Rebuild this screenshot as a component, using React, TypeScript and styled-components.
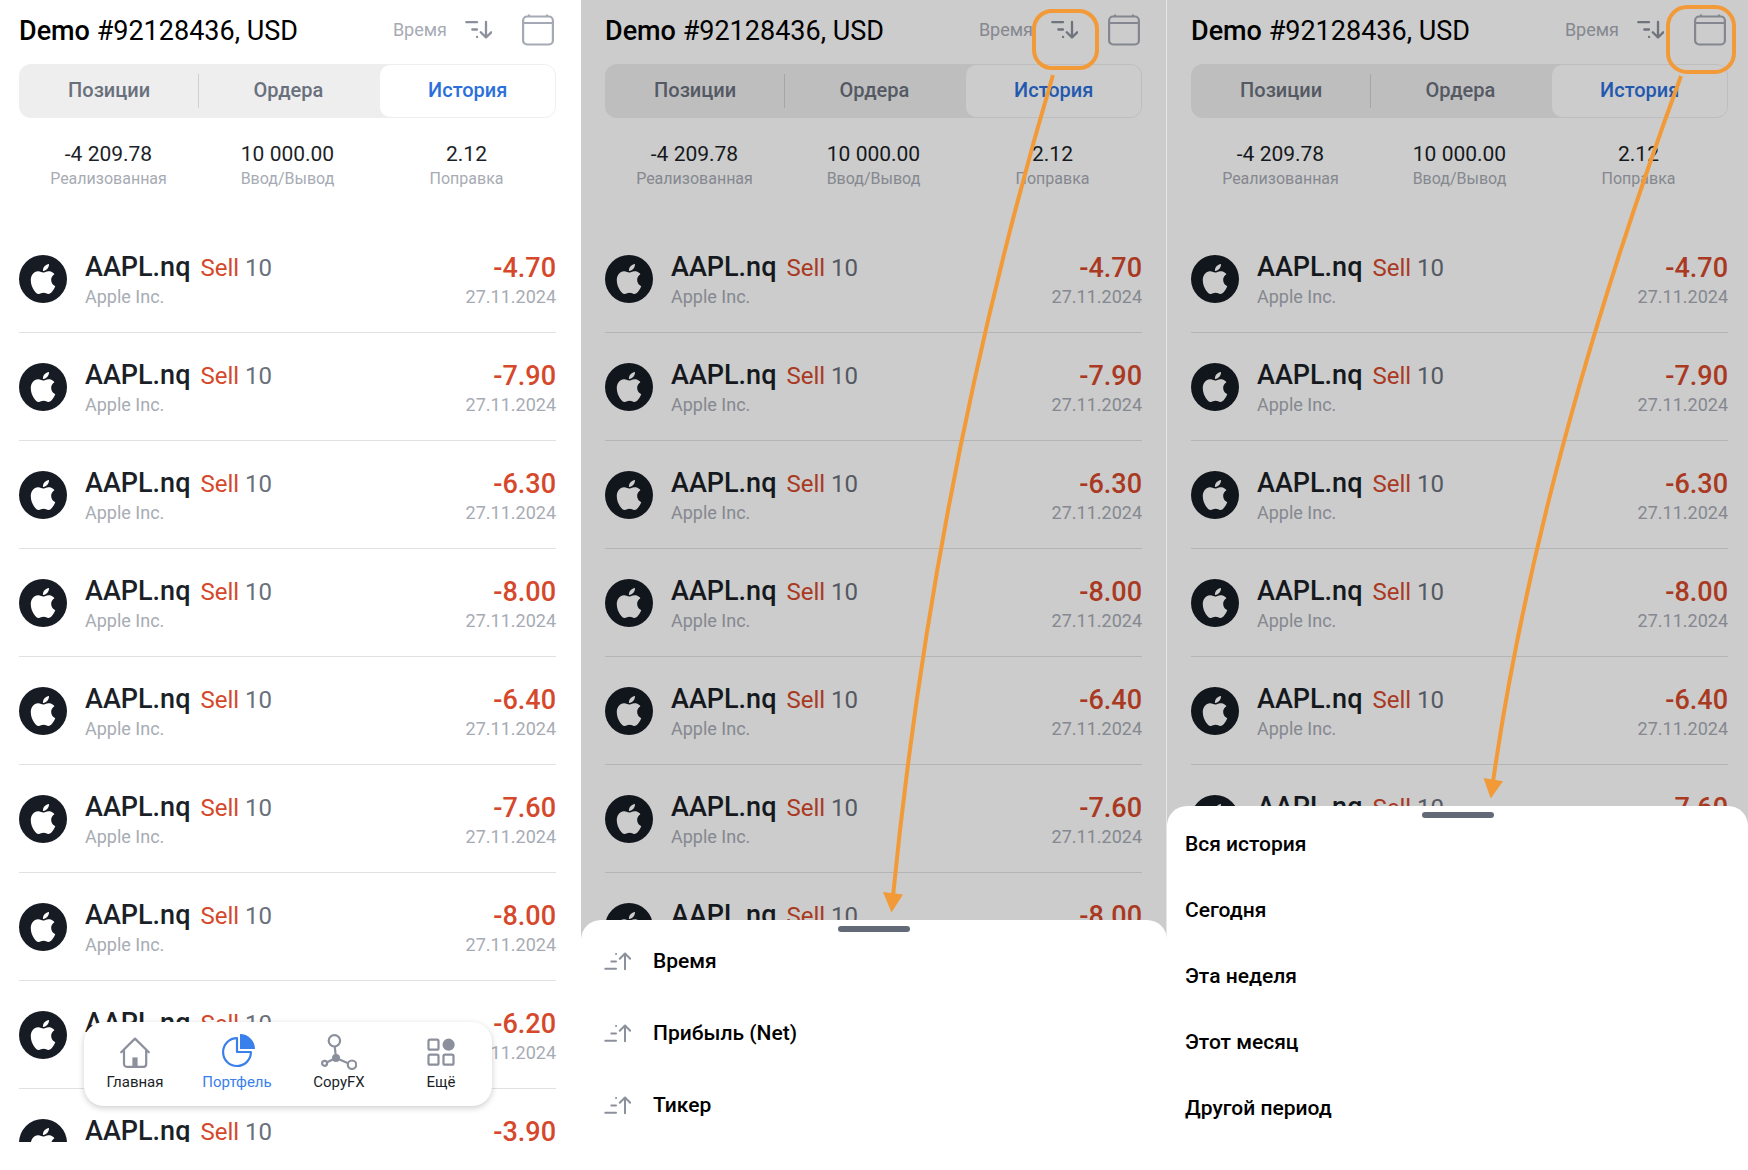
import React from "react";
import styled, { createGlobalStyle, css } from "styled-components";
import { SiApple } from "react-icons/si";

const color = {
  ink: "#1b1f27",
  muted: "#a7abb4",
  slate: "#69707c",
  icon: "#8b909c",
  red: "#d5482b",
  blue: "#2c6fdb",
  navBlue: "#3a80ec",
  orange: "#f29a38",
  line: "#e1e1e2",
};

const GlobalStyle = createGlobalStyle`
  *, *::before, *::after { box-sizing: border-box; }
  body { margin: 0; background: #fff; font-family: Roboto, "Noto Sans", sans-serif; }
  button { font: inherit; color: inherit; border: 0; padding: 0; background: none; cursor: pointer; }
  ul { list-style: none; margin: 0; padding: 0; }
`;

const Board = styled.main`
  position: relative;
  display: grid;
  grid-template-columns: 581fr 586fr 581fr;
  height: 100vh;
  overflow: hidden;
`;

const Phone = styled.section<{ $left: number; $right: number; $cut?: boolean }>`
  position: relative;
  min-width: 0;
  overflow: hidden;
  padding: 0 ${(p) => p.$right}px 0 ${(p) => p.$left}px;
  ${(p) => p.$cut && css`margin-bottom: 28px;`}
`;

const Header = styled.header`
  display: flex;
  align-items: center;
  height: 60px;
  margin-bottom: 4px;
  padding-right: 2px;
`;

const Title = styled.h1`
  flex: 1;
  margin: 0;
  padding-top: 2px;
  font-size: 27px;
  line-height: 32px;
  font-weight: 400;
  color: #000;
  white-space: nowrap;
`;

const Strong = styled.strong`
  font-weight: 500;
`;

const SortButton = styled.button`
  display: flex;
  align-items: center;
  gap: 18px;
  margin-right: 30px;
  font-size: 18px;
  line-height: 24px;
  color: ${color.muted};
`;

const CalendarButton = styled.button`
  display: flex;
`;

const Tabs = styled.nav`
  display: flex;
  align-items: center;
  height: 54px;
  padding: 1px;
  border-radius: 12px;
  background: #eeeeee;
`;

const Tab = styled.button<{ $active?: boolean }>`
  flex: 1;
  height: 100%;
  padding-bottom: 2px;
  font-size: 20px;
  line-height: 24px;
  font-weight: 500;
  color: ${(p) => (p.$active ? color.blue : color.slate)};
  ${(p) =>
    p.$active &&
    css`
      flex: 0 0 calc(33% - 2px);
      margin-left: 3px;
      background: #fff;
      border-radius: 10px;
    `}
`;

const TabDivider = styled.span`
  width: 1px;
  height: 34px;
  background: #cfd0d3;
`;

const Stats = styled.dl`
  display: grid;
  grid-template-columns: repeat(3, 1fr);
  margin: 0;
  padding: 23px 0 34px;
  text-align: center;
`;

const Stat = styled.div`
  display: flex;
  flex-direction: column-reverse;
`;

const StatValue = styled.dd`
  margin: 0;
  font-size: 21px;
  line-height: 26px;
  color: ${color.ink};
`;

const StatLabel = styled.dt`
  font-size: 16px;
  line-height: 24px;
  color: ${color.muted};
`;

const Deal = styled.li`
  display: flex;
  align-items: center;
  gap: 18px;
  height: 108px;
  border-bottom: 1px solid ${color.line};
`;

const Logo = styled.span`
  display: flex;
  align-items: center;
  justify-content: center;
  width: 48px;
  height: 48px;
  border-radius: 50%;
  background: #161b24;
  color: #fff;
`;

const DealInfo = styled.div`
  flex: 1;
`;

const DealHead = styled.div`
  display: flex;
  align-items: baseline;
  font-size: 24px;
  line-height: 36px;
`;

const Ticker = styled.span`
  margin-right: 10px;
  font-size: 27px;
  font-weight: 500;
  color: ${color.ink};
`;

const Side = styled.span`
  margin-right: 6px;
  color: ${color.red};
`;

const Volume = styled.span`
  color: ${color.slate};
`;

const Result = styled.div`
  text-align: right;
`;

const Profit = styled.div`
  font-size: 27px;
  line-height: 36px;
  font-weight: 500;
  color: ${color.red};
`;

const Note = styled.div`
  font-size: 18px;
  line-height: 22px;
  color: ${color.muted};
`;

const Shade = styled.div<{ $edge?: boolean }>`
  position: absolute;
  inset: 0;
  background: rgba(0, 0, 0, 0.2);
  ${(p) => p.$edge && css`border-right: 1px solid #e6e6e6;`}
`;

const Sheet = styled.div`
  position: absolute;
  left: 0;
  right: 0;
  bottom: 0;
  display: flex;
  flex-direction: column;
  padding: 6px 0 36px;
  border-radius: 20px 20px 0 0;
  background: #fff;
`;

const Handle = styled.span`
  align-self: center;
  width: 72px;
  height: 6px;
  border-radius: 3px;
  background: #636a77;
`;

const Options = styled.ul`
  display: flex;
  flex-direction: column;
  gap: 14px;
`;

const Option = styled.button<{ $height: number; $indent: number }>`
  display: flex;
  align-items: center;
  gap: 22px;
  width: 100%;
  height: ${(p) => p.$height}px;
  padding-left: ${(p) => p.$indent}px;
  font-size: 21px;
  line-height: 24px;
  font-weight: 500;
  color: #000;
`;

const Dock = styled.nav`
  position: absolute;
  left: 84px;
  right: 89px;
  bottom: 36px;
  display: grid;
  grid-template-columns: repeat(4, 1fr);
  padding: 12px 0 14px;
  border-radius: 20px;
  background: #fff;
  box-shadow: 0 2px 6px rgba(0, 0, 0, 0.2);
`;

const DockItem = styled.button<{ $active?: boolean }>`
  display: flex;
  flex-direction: column;
  align-items: center;
  gap: 2px;
  font-size: 15px;
  line-height: 20px;
  color: ${(p) => (p.$active ? color.navBlue : color.ink)};
`;

const Annotations = styled.svg`
  position: absolute;
  inset: 0;
  width: 100%;
  height: 100%;
  pointer-events: none;
`;

const SortDownIcon = () => (
  <svg width="27" height="20" viewBox="0 0 27 20" fill="none" stroke={color.icon} strokeWidth="2.3" strokeLinecap="round" strokeLinejoin="round" aria-hidden="true">
    <path d="M1.3 2.2H12M7.3 9.5H12M12 17h.1M21 1.8V17.3M15.8 12.3l5.2 5.2 5.2-5.2" />
  </svg>
);

const SortUpIcon = () => (
  <svg width="27" height="20" viewBox="0 0 27 20" fill="none" stroke={color.icon} strokeWidth="2" strokeLinecap="round" strokeLinejoin="round" aria-hidden="true">
    <path d="M1.3 17.8H12M7.3 10.4H12M12 3h.1M21 18.2V2.7M15.8 7.7L21 2.5l5.2 5.2" />
  </svg>
);

const CalendarIcon = () => (
  <svg width="32" height="32" viewBox="0 0 32 32" fill="none" stroke="#a5a9b3" strokeWidth="2.2" aria-hidden="true">
    <rect x="1.1" y="2.500" width="29.800" height="28" rx="4" />
    <path d="M1 9h30M7 .4V3M25 .4V3" />
  </svg>
);

const HomeIcon = () => (
  <svg width="36" height="36" viewBox="0 0 36 36" fill="none" stroke={color.icon} strokeWidth="2.2" strokeLinecap="round" strokeLinejoin="round" aria-hidden="true">
    <path d="M4.2 18.2L18 4.6l13.8 13.6M7 16v14a2.8 2.8 0 0 0 2.8 2.8h16.6a2.8 2.8 0 0 0 2.8-2.8V16" />
    <path d="M15.4 33v-9.6h5.2V33z" fill={color.icon} stroke="none" />
  </svg>
);

const PieIcon = () => (
  <svg width="36" height="36" viewBox="0 0 36 36" fill="none" stroke={color.navBlue} strokeWidth="2.2" strokeLinejoin="round" aria-hidden="true">
    <path d="M18 4.2A13.9 13.9 0 1 0 31.9 18H18z" />
    <path d="M21 0a15 15 0 0 1 15 15H21z" fill={color.navBlue} stroke="none" />
  </svg>
);

const NetworkIcon = () => (
  <svg width="36" height="36" viewBox="0 0 36 36" fill="none" stroke={color.icon} strokeWidth="2.2" aria-hidden="true">
    <circle cx="13.4" cy="6.8" r="5.7" />
    <circle cx="3.6" cy="29.3" r="2.5" />
    <circle cx="31" cy="30.7" r="4.2" />
    <circle cx="15" cy="24" r="4" fill={color.icon} stroke="none" />
    <path d="M13.7 12.4L15 24M6 28.2l9-4.2 12.2 5.2" />
  </svg>
);

const GridIcon = () => (
  <svg width="36" height="36" viewBox="0 0 36 36" fill="none" stroke={color.icon} strokeWidth="2.2" aria-hidden="true">
    <rect x="5.5" y="5.7" width="10" height="10" rx="1.5" />
    <rect x="5.5" y="20.7" width="10" height="10" rx="1.5" />
    <rect x="20.5" y="20.7" width="10" height="10" rx="1.5" />
    <circle cx="25.6" cy="10.7" r="6.1" fill={color.icon} stroke="none" />
  </svg>
);

const stats = [
  { label: "Реализованная", value: "-4 209.78" },
  { label: "Ввод/Вывод", value: "10 000.00" },
  { label: "Поправка", value: "2.12" },
];

const profits = ["-4.70", "-7.90", "-6.30", "-8.00", "-6.40", "-7.60", "-8.00", "-6.20", "-3.90"];

const sortOptions = ["Время", "Прибыль (Net)", "Тикер"];
const periods = ["Вся история", "Сегодня", "Эта неделя", "Этот месяц", "Другой период"];

function History() {
  return (
    <>
      <Header>
        <Title>
          <Strong>Demo</Strong> #92128436, USD
        </Title>
        <SortButton type="button">
          Время
          <SortDownIcon />
        </SortButton>
        <CalendarButton type="button" aria-label="Период">
          <CalendarIcon />
        </CalendarButton>
      </Header>
      <Tabs>
        <Tab type="button">Позиции</Tab>
        <TabDivider />
        <Tab type="button">Ордера</Tab>
        <Tab type="button" $active>
          История
        </Tab>
      </Tabs>
      <Stats>
        {stats.map((s) => (
          <Stat key={s.label}>
            <StatLabel>{s.label}</StatLabel>
            <StatValue>{s.value}</StatValue>
          </Stat>
        ))}
      </Stats>
      <ul>
        {profits.map((profit, i) => (
          <Deal key={i}>
            <Logo>
              <SiApple size={30} aria-hidden="true" />
            </Logo>
            <DealInfo>
              <DealHead>
                <Ticker>AAPL.nq</Ticker>
                <Side>Sell</Side>
                <Volume>10</Volume>
              </DealHead>
              <Note>Apple Inc.</Note>
            </DealInfo>
            <Result>
              <Profit>{profit}</Profit>
              <Note>27.11.2024</Note>
            </Result>
          </Deal>
        ))}
      </ul>
    </>
  );
}

export default function App() {
  return (
    <>
      <GlobalStyle />
      <Board>
        <Phone $left={19} $right={25} $cut>
          <History />
          <Dock>
            <DockItem type="button">
              <HomeIcon />
              Главная
            </DockItem>
            <DockItem type="button" $active>
              <PieIcon />
              Портфель
            </DockItem>
            <DockItem type="button">
              <NetworkIcon />
              CopyFX
            </DockItem>
            <DockItem type="button">
              <GridIcon />
              Ещё
            </DockItem>
          </Dock>
        </Phone>

        <Phone $left={24} $right={25}>
          <History />
          <Shade $edge />
          <Sheet>
            <Handle />
            <Options>
              {sortOptions.map((o) => (
                <li key={o}>
                  <Option type="button" $height={58} $indent={23}>
                    <SortUpIcon />
                    {o}
                  </Option>
                </li>
              ))}
            </Options>
          </Sheet>
        </Phone>

        <Phone $left={24} $right={20}>
          <History />
          <Shade />
          <Sheet>
            <Handle />
            <Options>
              {periods.map((o) => (
                <li key={o}>
                  <Option type="button" $height={52} $indent={18}>
                    {o}
                  </Option>
                </li>
              ))}
            </Options>
          </Sheet>
        </Phone>

        <Annotations viewBox="0 0 1748 1170" preserveAspectRatio="none" fill="none" stroke={color.orange} strokeWidth="4" aria-hidden="true">
          <rect x="1034" y="11" width="63" height="57" rx="18" />
          <path d="M1053 75Q935 473 893 896" />
          <path d="M883 892l20 2.500-11.500 18z" fill={color.orange} stroke="none" />
          <rect x="1668" y="7" width="66" height="65" rx="19" />
          <path d="M1681 76Q1538 465 1493 782" />
          <path d="M1483.500 778l19.500 3.300-12.300 17.200z" fill={color.orange} stroke="none" />
        </Annotations>
      </Board>
    </>
  );
}
